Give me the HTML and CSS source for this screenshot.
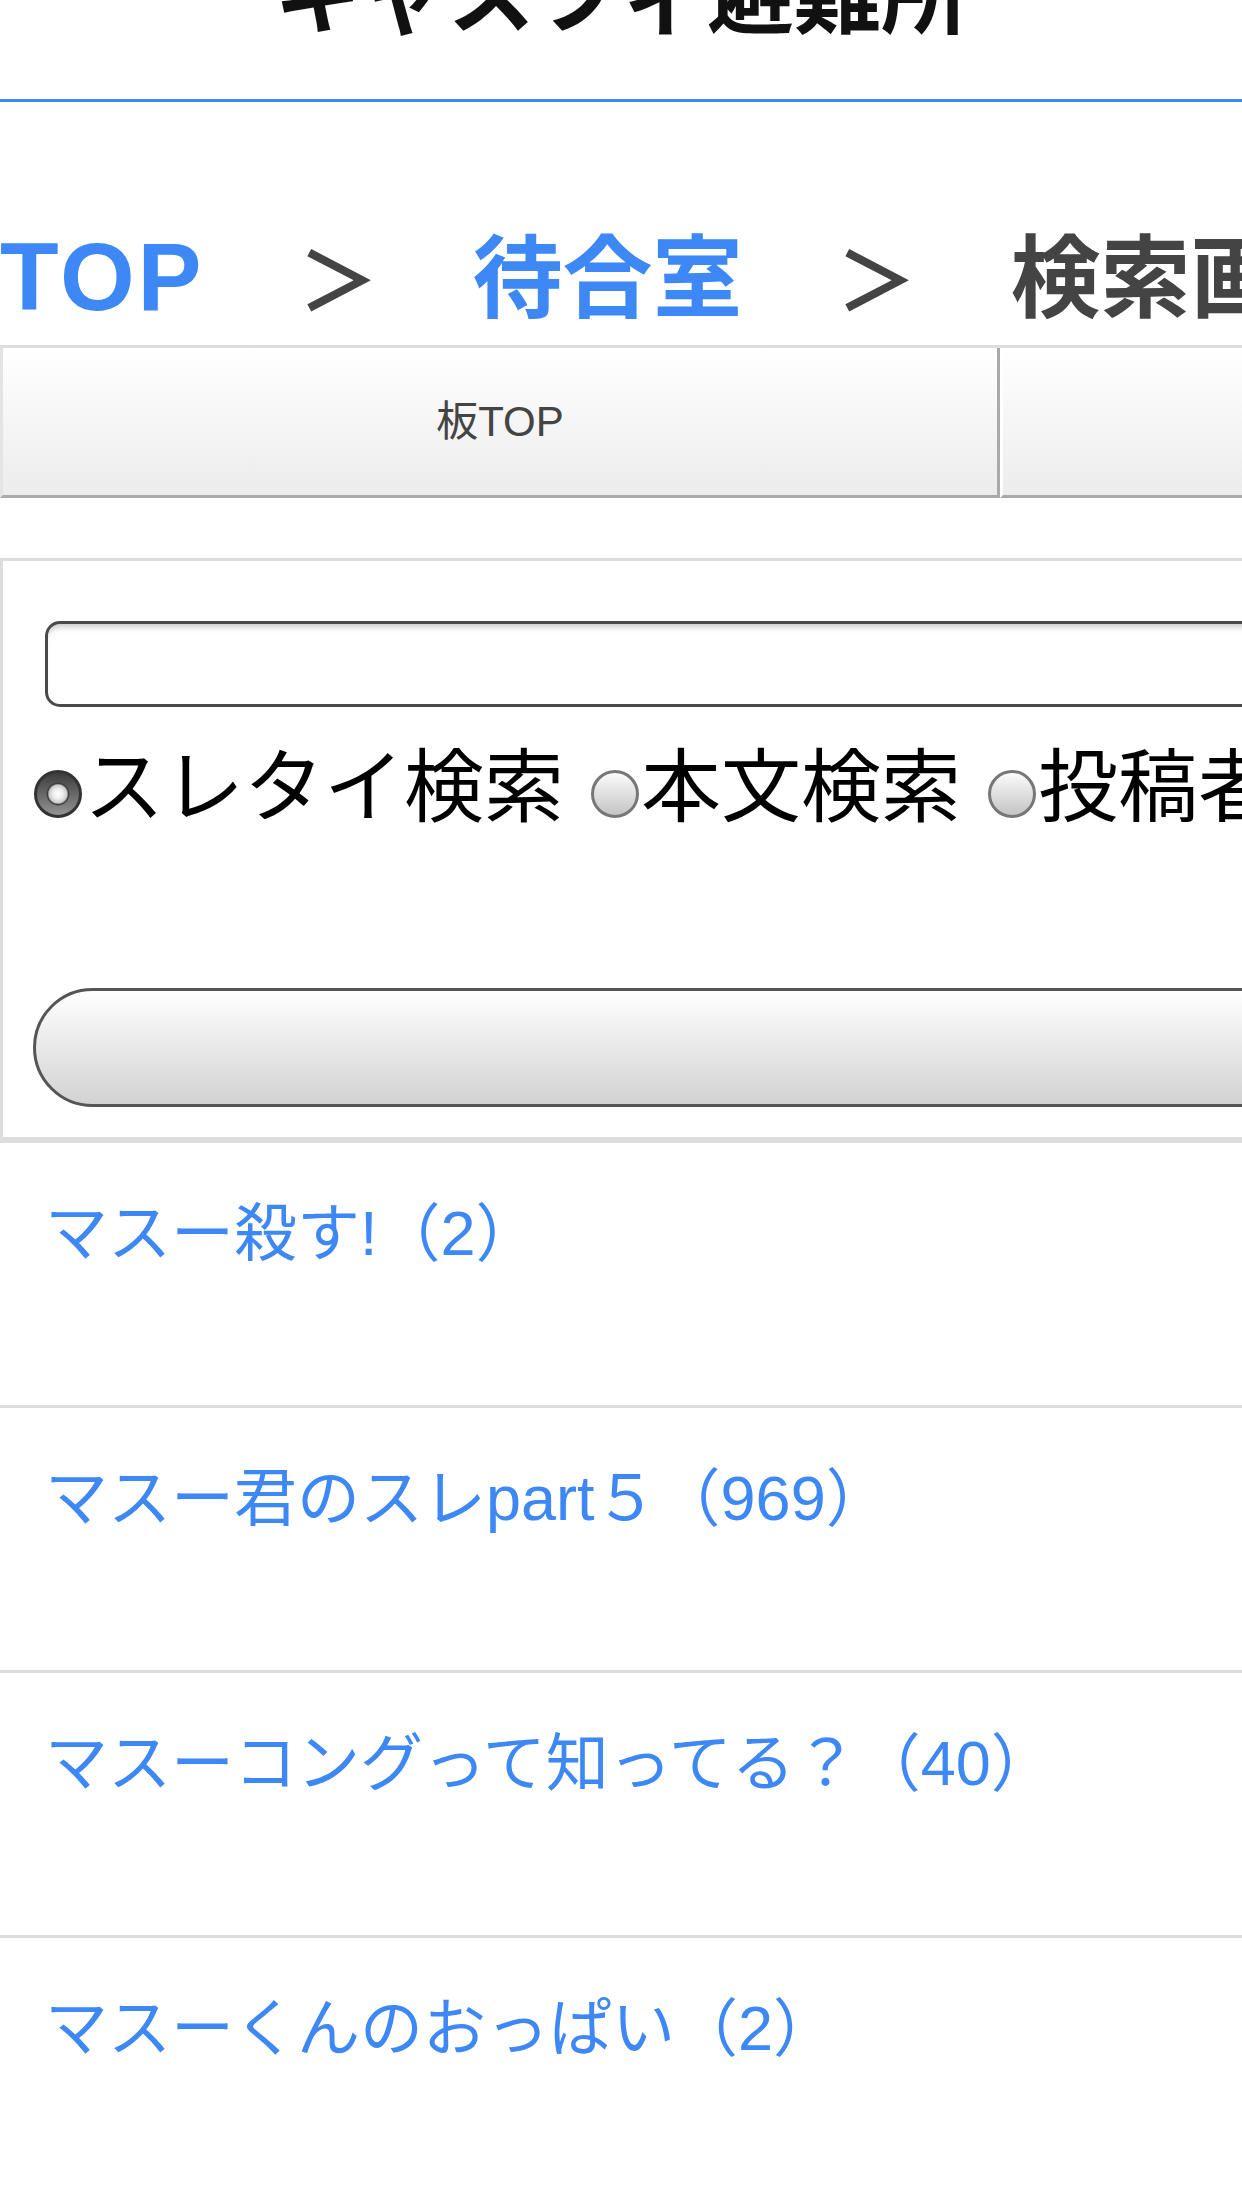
FILE: index.html
```html
<!DOCTYPE html>
<html lang="ja">
<head>
<meta charset="utf-8">
<title>検索画面 - キャスフィ避難所</title>
<link rel="stylesheet" href="styles.css">
</head>
<body>
<header class="site-header">
  <h1 class="site-title">キャスフィ避難所</h1>
</header>
<div class="page">
  <nav class="crumbs">
    <a class="crumb-link crumb-top" href="#">TOP</a>
    <span class="crumb-sep">＞</span>
    <a class="crumb-link crumb-jp" href="#">待合室</a>
    <span class="crumb-sep">＞</span>
    <span class="crumb-current">検索画面</span>
  </nav>
  <div class="tabs">
    <a class="tab tab-first" href="#">板TOP</a>
    <a class="tab" href="#">スレ作成</a>
  </div>
  <form class="search-box">
    <input class="search-input" type="text" name="q">
    <div class="search-modes"><label class="mode"><input class="radio" type="radio" name="mode" checked>スレタイ検索</label><label class="mode"><input class="radio" type="radio" name="mode">本文検索</label><label class="mode"><input class="radio" type="radio" name="mode">投稿者検索</label></div>
    <button class="search-btn" type="button">検索</button>
  </form>
  <ul class="threads">
    <li class="thread"><a class="thread-link" href="#">マスー殺す!（2）</a></li>
    <li class="thread"><a class="thread-link" href="#">マスー君のスレpart５（969）</a></li>
    <li class="thread"><a class="thread-link" href="#">マスーコングって知ってる？（40）</a></li>
    <li class="thread"><a class="thread-link" href="#">マスーくんのおっぱい（2）</a></li>
  </ul>
</div>
</body>
</html>
```
FILE: styles.css
```css
html, body {
  margin: 0;
  padding: 0;
  background: #fff;
  overflow: hidden;
}

body {
  font-family: "Liberation Sans", "Noto Sans CJK JP", sans-serif;
  color: #444;
}

a {
  text-decoration: none;
}

.site-header {
  height: 99px;
  border-bottom: 3px solid #3d88f5;
  display: flex;
  justify-content: center;
  align-items: flex-end;
  overflow: hidden;
}

.site-title {
  margin: 0 0 58px;
  font-family: "Liberation Serif", "Noto Sans CJK JP", serif;
  font-size: 87px;
  line-height: 1;
  font-weight: 700;
  color: #111;
  white-space: nowrap;
}

.page {
  width: 2600px;
}

.crumbs {
  display: flex;
  align-items: baseline;
  gap: 94px;
  height: 115px;
  padding: 117px 0 11px;
  font-size: 90px;
  line-height: 115px;
  font-weight: 700;
  white-space: nowrap;
}

.crumb-link {
  color: #3d88f5;
}

.crumb-top {
  font-size: 96px;
  letter-spacing: 3px;
}

.crumb-sep {
  font-size: 80px;
  color: #444;
}

.crumb-current {
  color: #444;
}

.tabs {
  display: flex;
  border-top: 3px solid #ddd;
}

.tab {
  flex: 0 0 1000px;
  box-sizing: border-box;
  height: 150px;
  line-height: 147px;
  text-align: center;
  font-size: 42px;
  color: #444;
  background: linear-gradient(#ffffff, #ececec);
  border-left: 3px solid #fff;
  border-right: 3px solid #aaa;
  border-bottom: 3px solid #aaa;
}

.tab-first {
  border-left-color: #e4e4e4;
}

.search-box {
  margin-top: 60px;
  border: 3px solid #ddd;
  padding: 60px 30px 30px;
}

.search-input {
  display: block;
  box-sizing: border-box;
  width: calc(100% - 24px);
  height: 86px;
  margin: 0 12px;
  border: 3px solid #4a4a4a;
  border-radius: 15px;
  background: #fff;
  box-shadow: inset 0 7px 6px -4px rgba(0, 0, 0, 0.22);
  font-size: 42px;
  outline: none;
}

.search-modes {
  margin-top: 33px;
  font-family: "Liberation Serif", "Noto Sans CJK JP", serif;
  font-size: 80px;
  line-height: 96px;
  color: #000;
  white-space: nowrap;
}

.mode + .mode {
  margin-left: 26px;
}

.radio {
  -webkit-appearance: none;
  appearance: none;
  box-sizing: border-box;
  width: 48px;
  height: 48px;
  margin: 0 2px -3px 1px;
  vertical-align: baseline;
  border: 3px solid #777;
  border-radius: 50%;
  background: linear-gradient(#fbfbfb, #c4c4c4);
}

.radio:checked {
  border-color: #333;
  background:
    radial-gradient(circle at 50% 50%, #ffffff 0, #ededed 5px, #c9c9c9 9px, #3a3a3a 10.5px, rgba(0, 0, 0, 0) 12px),
    linear-gradient(#3c3c3c, #939393);
}

.search-btn {
  display: block;
  box-sizing: border-box;
  width: 100%;
  height: 119px;
  margin-top: 152px;
  border: 3px solid #555;
  border-radius: 60px;
  background: linear-gradient(#ffffff, #d2d2d2);
  font-size: 42px;
  color: #444;
}

.threads {
  list-style: none;
  margin: 0;
  padding: 0;
}

.thread {
  box-sizing: border-box;
  height: 265px;
  border-top: 3px solid #ddd;
  padding: 43px 45px 0;
  font-size: 63px;
  line-height: 94px;
  white-space: nowrap;
}

.thread-link {
  color: #3d88f5;
}
```
